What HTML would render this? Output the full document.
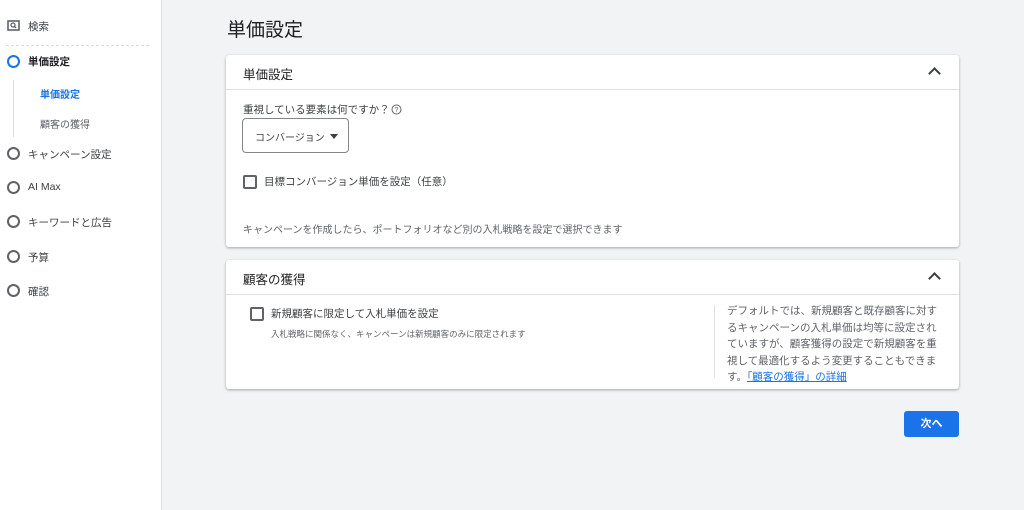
<!DOCTYPE html>
<html><head><meta charset="utf-8"><style>
*{margin:0;padding:0;box-sizing:border-box}
body{width:1024px;height:510px;background:#f1f3f4;font-family:"Liberation Sans","Noto Sans CJK JP",sans-serif;color:#3c4043;position:relative;overflow:hidden}
.a{position:absolute;white-space:nowrap}
.side{position:absolute;left:0;top:0;width:162px;height:510px;background:#fff;border-right:1px solid #e0e0e0}
.circ{position:absolute;left:7px;width:13px;height:13px;border:2px solid #5f6368;border-radius:50%}
.si{position:absolute;left:28px;font-size:10.5px;color:#3c4043}
.card{position:absolute;left:226px;width:733px;background:#fff;border-radius:3px;box-shadow:0 1px 2px rgba(60,64,67,.3),0 1px 3px rgba(60,64,67,.15)}
.hd{height:35px;border-bottom:1px solid #e0e0e0;font-size:12.5px;color:#202124;padding:9px 0 0 17px;position:relative}
.chev{position:absolute;right:20px;top:14px;width:9px;height:9px;border-left:2px solid #3c4043;border-top:2px solid #3c4043;transform:rotate(45deg)}
.cb{position:absolute;width:14px;height:14px;border:2px solid #5f6368;border-radius:2px}
</style></head><body>
<div class="side">
<svg class="a" style="left:7px;top:20px" width="13" height="11" viewBox="0 0 13 11"><rect x="1" y="1" width="11" height="9" fill="none" stroke="#5f6368" stroke-width="1.6"/><circle cx="6" cy="5" r="2" fill="none" stroke="#5f6368" stroke-width="1.3"/><line x1="7.5" y1="6.5" x2="9" y2="8" stroke="#5f6368" stroke-width="1.3"/></svg>
<div class="si" style="top:19px">検索</div>
<div class="a" style="left:6px;top:45px;width:143px;border-top:1px dashed #dadce0"></div>
<div class="circ" style="top:55px;border-color:#1a73e8"></div>
<div class="si" style="top:54px;font-weight:bold;color:#202124">単価設定</div>
<div class="a" style="left:13px;top:80px;height:57px;border-left:1px solid #dadce0"></div>
<div class="si" style="left:40px;top:86px;font-size:10px;font-weight:bold;color:#1a73e8">単価設定</div>
<div class="si" style="left:40px;top:116px;font-size:10px;color:#5f6368">顧客の獲得</div>
<div class="circ" style="top:147px"></div><div class="si" style="top:147px">キャンペーン設定</div>
<div class="circ" style="top:181px"></div><div class="si" style="top:181px">AI Max</div>
<div class="circ" style="top:215px"></div><div class="si" style="top:215px">キーワードと広告</div>
<div class="circ" style="top:250px"></div><div class="si" style="top:250px">予算</div>
<div class="circ" style="top:284px"></div><div class="si" style="top:284px">確認</div>
</div>
<div class="a" style="left:227px;top:15px;font-size:19px;color:#202124">単価設定</div>
<div class="card" style="top:55px;height:192px">
<div class="hd">単価設定<div class="chev"></div></div>
<div class="a" style="left:17px;top:47px;font-size:10.5px">重視している要素は何ですか？</div>
<svg class="a" style="left:165px;top:49px" width="11" height="11" viewBox="0 0 11 11"><circle cx="5.5" cy="5.5" r="4.5" fill="none" stroke="#5f6368" stroke-width="1"/><text x="5.5" y="8" font-size="7" text-anchor="middle" fill="#5f6368" font-family="Liberation Sans">?</text></svg>
<div class="a" style="left:16px;top:63px;width:107px;height:35px;border:1px solid #80868b;border-radius:4px;font-size:10px;padding:10px 0 0 12px">コンバージョン<span style="position:absolute;left:87px;top:15px;border-left:4px solid transparent;border-right:4px solid transparent;border-top:5px solid #3c4043"></span></div>
<div class="cb" style="left:17px;top:120px"></div>
<div class="a" style="left:38px;top:119px;font-size:10.5px">目標コンバージョン単価を設定（任意）</div>
<div class="a" style="left:17px;top:166px;font-size:10px;color:#5f6368">キャンペーンを作成したら、ポートフォリオなど別の入札戦略を設定で選択できます</div>
</div>
<div class="card" style="top:260px;height:129px">
<div class="hd">顧客の獲得<div class="chev"></div></div>
<div class="cb" style="left:24px;top:47px"></div>
<div class="a" style="left:45px;top:46px;font-size:10.5px">新規顧客に限定して入札単価を設定</div>
<div class="a" style="left:45px;top:68px;font-size:8.5px;color:#5f6368">入札戦略に関係なく、キャンペーンは新規顧客のみに限定されます</div>
<div class="a" style="left:488px;top:45px;height:73px;border-left:1px solid #e0e0e0"></div>
<div class="a" style="left:501px;top:43px;width:215px;white-space:normal;font-size:10.5px;line-height:16.5px;color:#5f6368">デフォルトでは、新規顧客と既存顧客に対するキャンペーンの入札単価は均等に設定されていますが、顧客獲得の設定で新規顧客を重視して最適化するよう変更することもできます。<span style="color:#1a73e8;text-decoration:underline">「顧客の獲得」の詳細</span></div>
</div>
<div class="a" style="left:904px;top:411px;width:55px;height:26px;background:#1a73e8;border-radius:3px;color:#fff;font-size:11px;font-weight:bold;text-align:center;line-height:26px">次へ</div>
</body></html>
